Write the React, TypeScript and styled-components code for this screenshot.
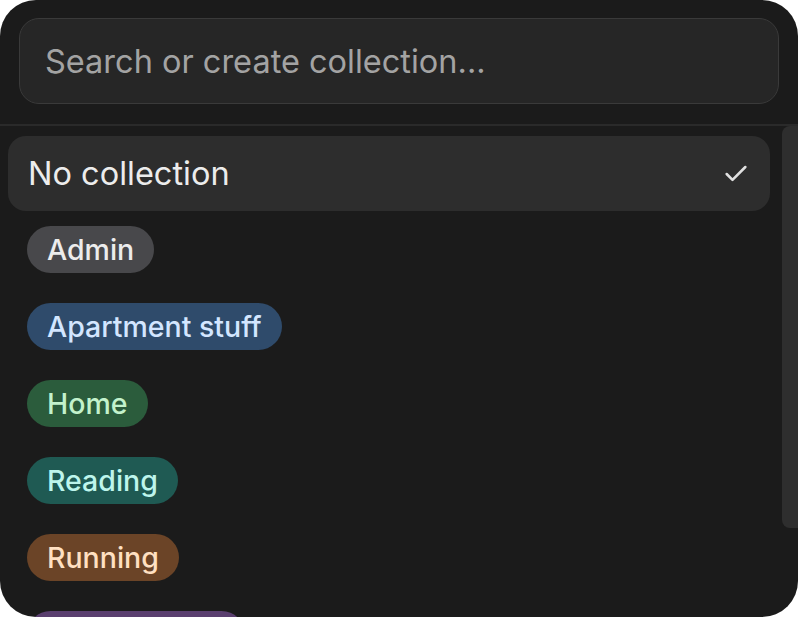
import React from "react";
import styled, { createGlobalStyle } from "styled-components";
import { Check } from "lucide-react";

const Global = createGlobalStyle`
  html, body { margin: 0; padding: 0; background: #ffffff; }
  body { font-family: "Inter", "Noto Sans", sans-serif; }
  * { box-sizing: border-box; }
`;

const Panel = styled.div`
  width: 798px;
  height: 617px;
  background: #1b1b1b;
  border-radius: 36px;
  overflow: hidden;
  display: flex;
  flex-direction: column;
`;

const Header = styled.div`
  padding: 18px 19px 20px 19px;
  border-bottom: 2px solid #2a2a2a;
  flex-shrink: 0;
`;

const SearchBox = styled.div`
  height: 86px;
  border: 1.5px solid #3a3a3a;
  border-radius: 20px;
  background: #262626;
  display: flex;
  align-items: center;
  padding: 0 25px;
  font-size: 32.5px;
  color: #a3a3a3;
`;

const Body = styled.div`
  flex: 1;
  display: flex;
  min-height: 0;
`;

const List = styled.div`
  flex: 1;
  padding: 10px 12px 0 8px;
  display: flex;
  flex-direction: column;
  overflow: hidden;
`;

const Scrollbar = styled.div`
  width: 16px;
  height: 402px;
  background: #2e2e2e;
  border-radius: 8px 0 0 8px;
  flex-shrink: 0;
`;

const SelectedRow = styled.div`
  height: 75px;
  flex-shrink: 0;
  border-radius: 18px;
  background: #2d2d2d;
  display: flex;
  align-items: center;
  justify-content: space-between;
  padding: 0 20px 0 20px;
  font-size: 32.5px;
  color: #ececec;
`;

const Item = styled.div`
  height: 77px;
  display: flex;
  align-items: center;
  padding-left: 19px;
  flex-shrink: 0;
`;

const Pill = styled.span<{ $bg: string; $fg: string }>`
  height: 47px;
  display: inline-flex;
  align-items: center;
  padding: 0 20px;
  border-radius: 24px;
  background: ${(p) => p.$bg};
  color: ${(p) => p.$fg};
  font-size: 28.5px;
  font-weight: 500;
`;

const collections = [
  { name: "Admin", bg: "#48484b", fg: "#ececec" },
  { name: "Apartment stuff", bg: "#2f4b6b", fg: "#d3e6ff" },
  { name: "Home", bg: "#2b5c3c", fg: "#c3f2cc" },
  { name: "Reading", bg: "#1f5a53", fg: "#bdf5ec" },
  { name: "Running", bg: "#6b4427", fg: "#ffe0c2" },
  { name: "Side projects", bg: "#5a3f6f", fg: "#ecd7ff" },
];

export default function App() {
  return (
    <>
      <Global />
      <Panel>
        <Header>
          <SearchBox>Search or create collection...</SearchBox>
        </Header>
        <Body>
          <List>
            <SelectedRow>
              <span>No collection</span>
              <Check size={28} strokeWidth={2.2} color="#e0e0e0" />
            </SelectedRow>
            {collections.map((c) => (
              <Item key={c.name}>
                <Pill $bg={c.bg} $fg={c.fg}>{c.name}</Pill>
              </Item>
            ))}
          </List>
          <Scrollbar />
        </Body>
      </Panel>
    </>
  );
}
